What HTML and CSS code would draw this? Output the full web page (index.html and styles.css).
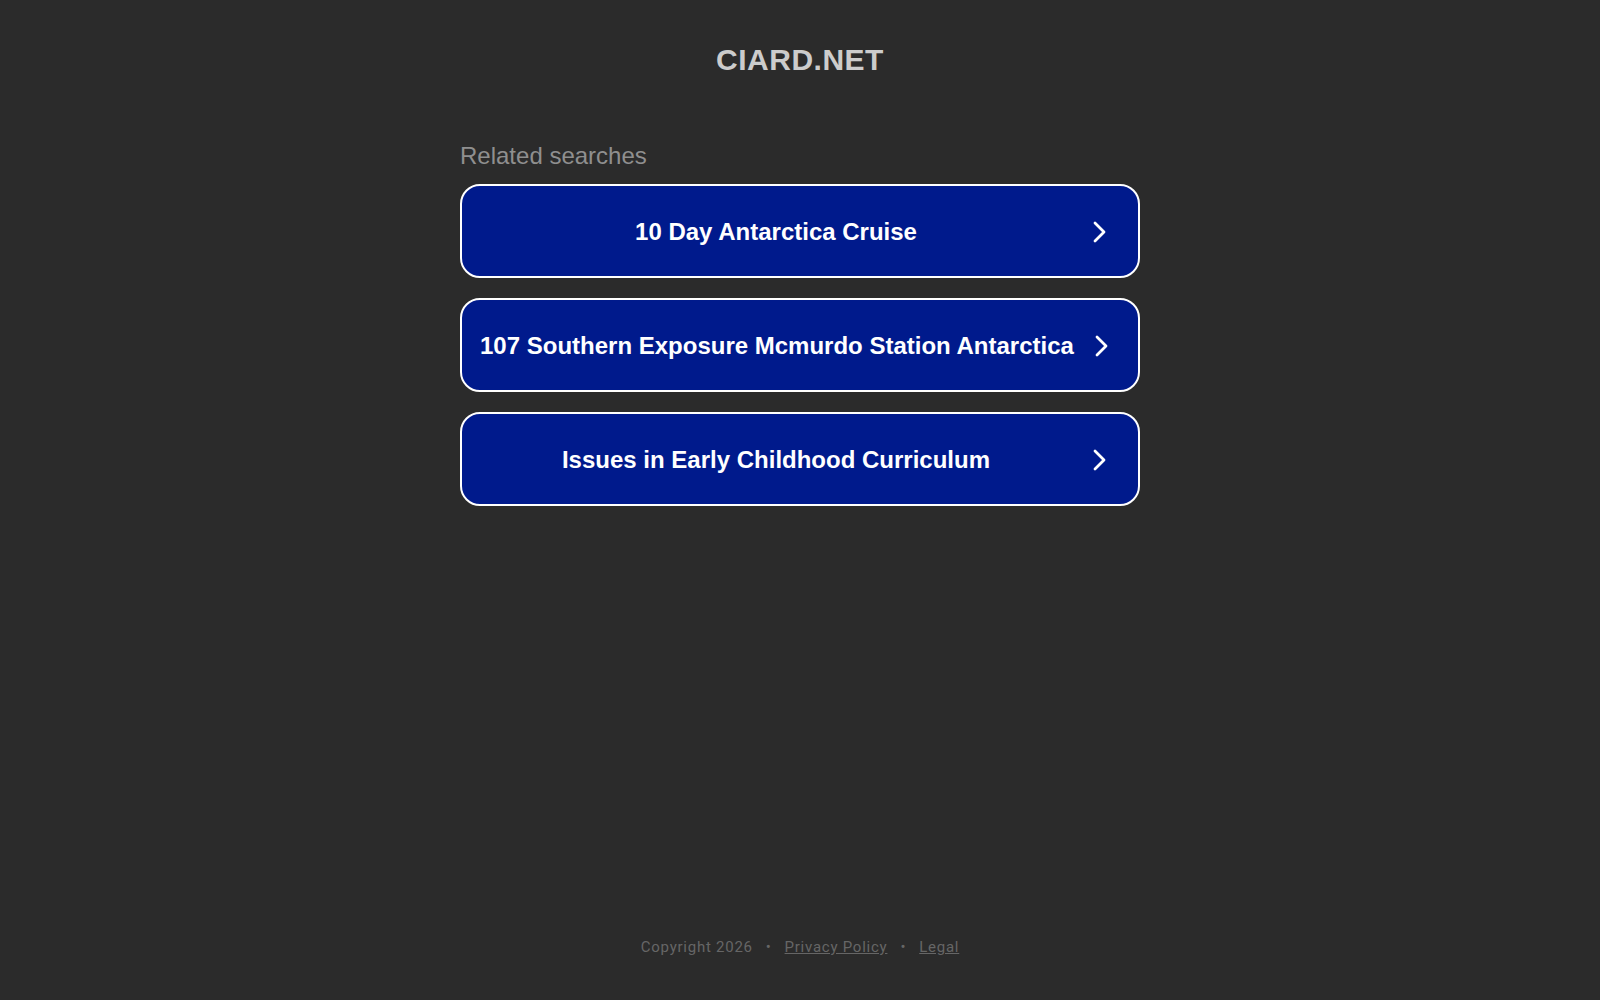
FILE: index.html
```html
<!DOCTYPE html>
<html lang="en">
<head>
<meta charset="utf-8">
<title>ciard.net</title>
<link rel="stylesheet" href="styles.css">
</head>
<body>
<div class="page">
  <header class="header">
    <h1 class="title">CIARD.NET</h1>
  </header>
  <main class="main">
    <div class="related">
      <h2 class="related-title">Related searches</h2>
      <a class="search-btn" href="#">
        <span class="search-text">10 Day Antarctica Cruise</span>
        <span class="search-arrow"><svg width="24" height="24" viewBox="0 0 24 24"><polyline points="7,3 16,12 7,21" fill="none" stroke="#fff" stroke-width="2.8" stroke-linecap="round" stroke-linejoin="round"/></svg></span>
      </a>
      <a class="search-btn" href="#">
        <span class="search-text">107 Southern Exposure Mcmurdo Station Antarctica</span>
        <span class="search-arrow"><svg width="24" height="24" viewBox="0 0 24 24"><polyline points="7,3 16,12 7,21" fill="none" stroke="#fff" stroke-width="2.8" stroke-linecap="round" stroke-linejoin="round"/></svg></span>
      </a>
      <a class="search-btn" href="#">
        <span class="search-text">Issues in Early Childhood Curriculum</span>
        <span class="search-arrow"><svg width="24" height="24" viewBox="0 0 24 24"><polyline points="7,3 16,12 7,21" fill="none" stroke="#fff" stroke-width="2.8" stroke-linecap="round" stroke-linejoin="round"/></svg></span>
      </a>
    </div>
  </main>
  <footer class="footer">
    <span class="copy">Copyright 2026</span>
    <span class="sep">•</span>
    <a class="foot-link" href="#">Privacy Policy</a>
    <span class="sep">•</span>
    <a class="foot-link" href="#">Legal</a>
  </footer>
</div>
</body>
</html>
```
FILE: styles.css
```css
html, body {
  margin: 0;
  padding: 0;
  background: #2b2b2b;
}
body {
  font-family: "Liberation Sans", Arial, sans-serif;
}
.page {
  min-height: 100vh;
  display: flex;
  flex-direction: column;
}
.header {
  padding-top: 42px;
}
.title {
  margin: 0;
  font-size: 30px;
  line-height: 36px;
  font-weight: 700;
  letter-spacing: 0.5px;
  color: #cccccc;
  text-align: center;
}
.main {
  display: flex;
  justify-content: center;
}
.related {
  width: 680px;
  margin-top: 64px;
  display: flex;
  flex-direction: column;
}
.related-title {
  margin: 0 0 14px;
  font-size: 24px;
  line-height: 28px;
  font-weight: 400;
  color: #8f8f8f;
}
.search-btn {
  box-sizing: border-box;
  height: 94px;
  margin-bottom: 20px;
  border: 2px solid #ffffff;
  border-radius: 20px;
  background: #001a8c;
  display: flex;
  align-items: center;
  padding: 1px 0 0 18px;
  text-decoration: none;
  color: #ffffff;
}
.search-text {
  flex: 1;
  text-align: center;
  font-size: 24px;
  line-height: 28px;
  font-weight: 700;
  white-space: nowrap;
}
.search-arrow {
  width: 24px;
  height: 24px;
  margin: 0 26px 0 16px;
  display: flex;
}
.footer {
  margin-top: auto;
  padding-bottom: 43px;
  display: flex;
  justify-content: center;
  gap: 13px;
  font-family: Roboto, "Liberation Sans", sans-serif;
  font-size: 15px;
  line-height: 20px;
  letter-spacing: 0.75px;
  color: #666666;
}
.foot-link {
  color: #666666;
  text-decoration: underline;
}
.sep {
  color: #666666;
}
```
